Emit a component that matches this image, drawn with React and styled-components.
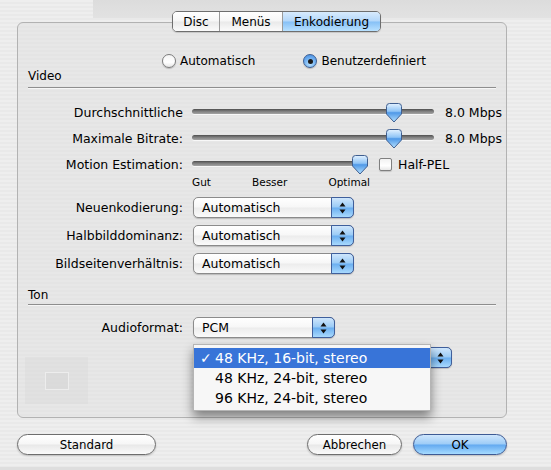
import React from "react";
import styled, { createGlobalStyle } from "styled-components";

const GlobalStyle = createGlobalStyle`
  html, body { margin: 0; padding: 0; }
  body {
    font-family: "DejaVu Sans", "Liberation Sans", sans-serif;
    font-size: 12.5px;
    color: #000;
  }
`;

const Sheet = styled.div`
  width: 551px;
  height: 470px;
  box-sizing: border-box;
  padding-top: 11px;
  display: flex;
  flex-direction: column;
  overflow: hidden;
  background:
    linear-gradient(#dcdcdc, #e2e2e2) 93px 0 / 100% 18px no-repeat,
    linear-gradient(#dedede, #dedede) 0 467px / 100% 3px no-repeat,
    repeating-linear-gradient(#eeeeee 0px, #eeeeee 2px, #e9e9e9 2px, #e9e9e9 4px);
`;

const Tabs = styled.div`
  display: flex;
  align-self: center;
  margin-left: 2px;
  height: 21px;
  box-sizing: border-box;
  border: 1px solid #6e6e6e;
  border-radius: 5px;
  overflow: hidden;
  position: relative;
  z-index: 2;
  box-shadow: 0 1px 1px rgba(0, 0, 0, 0.15);
`;

const Tab = styled.div`
  width: ${p => p.$w}px;
  display: flex;
  align-items: center;
  justify-content: center;
  font-size: 12px;
  border-left: ${p => (p.$first ? "none" : "1px solid #9a9a9a")};
  background: ${p =>
    p.$active
      ? "linear-gradient(#d8ebfd 0%, #b3d7fa 48%, #86c0f6 52%, #b8e1ff 100%)"
      : "linear-gradient(#ffffff 0%, #f6f6f6 48%, #e9e9e9 52%, #fbfbfb 100%)"};
`;

const Box = styled.div`
  margin: -10px 0 0 17px;
  width: 490px;
  height: 396px;
  box-sizing: border-box;
  border: 1px solid #b2b2b2;
  border-radius: 6px;
  background: rgba(222, 222, 222, 0.45);
  display: flex;
  flex-direction: column;
  position: relative;
`;

const RadioRow = styled.div`
  display: flex;
  align-items: center;
  height: 16px;
  margin-top: 30px;
  padding-left: 144px;
  gap: 48px;
  font-size: 12px;
`;

const RadioItem = styled.label`
  display: flex;
  align-items: center;
  gap: 4px;
`;

const RadioDot = styled.span`
  width: 14px;
  height: 14px;
  box-sizing: border-box;
  border-radius: 50%;
  border: 1px solid ${p => (p.$on ? "#3d5f93" : "#7c7c7c")};
  display: flex;
  align-items: center;
  justify-content: center;
  background: ${p =>
    p.$on
      ? "radial-gradient(circle at 50% 75%, #b9e2ff 0%, #6eaef0 55%, #3f86dc 100%)"
      : "linear-gradient(#f4f4f4, #ffffff 60%, #e6e6e6)"};
  box-shadow: 0 1px 1px rgba(0, 0, 0, 0.2);
  &::after {
    content: "";
    display: ${p => (p.$on ? "block" : "none")};
    width: 5px;
    height: 5px;
    border-radius: 50%;
    background: #1b1b1b;
  }
`;

const SectionTitle = styled.div`
  margin-left: 10px;
  font-size: 12px;
  line-height: 14px;
  margin-top: ${p => p.$mt}px;
`;

const Rule = styled.div`
  margin: ${p => p.$mt}px 10px 0 10px;
  border-top: 1px solid #8e8e8e;
  border-bottom: 1px solid #f6f6f6;
`;

const Row = styled.div`
  display: flex;
  align-items: ${p => (p.$top ? "flex-start" : "center")};
  margin-top: ${p => p.$mt}px;
`;

const Label = styled.div`
  width: 175px;
  flex: none;
  text-align: right;
  padding-right: 10px;
  box-sizing: border-box;
  line-height: 20px;
  white-space: nowrap;
`;

const SliderBox = styled.div`
  position: relative;
  width: ${p => p.$w}px;
  height: 20px;
  margin-left: -1px;
  flex: none;
`;

const Track = styled.div`
  position: absolute;
  left: 0;
  right: 0;
  top: 6px;
  height: 5px;
  border-radius: 3px;
  background: linear-gradient(#4e4e4e, #7d7d7d 45%, #a4a4a4);
  box-shadow: 0 1px 0 rgba(255, 255, 255, 0.7);
`;

const ThumbWrap = styled.div`
  position: absolute;
  top: 0;
  width: 16px;
  height: 20px;
`;

const Value = styled.div`
  margin-left: 11px;
  line-height: 20px;
`;

const Ticks = styled.div`
  margin-left: 174px;
  width: 178px;
  display: flex;
  justify-content: space-between;
  font-size: 10.5px;
  line-height: 12px;
  margin-top: 1px;
`;

const Check = styled.span`
  width: 13px;
  height: 13px;
  box-sizing: border-box;
  border: 1px solid #7f7f7f;
  border-radius: 2px;
  background: linear-gradient(#f2f2f2, #ffffff 60%, #e8e8e8);
  box-shadow: 0 1px 1px rgba(0, 0, 0, 0.15);
  margin: 3px 6px 0 11px;
`;

const CheckText = styled.span`
  line-height: 20px;
`;

const Popup = styled.div`
  position: relative;
  width: ${p => p.$w}px;
  height: 21px;
  box-sizing: border-box;
  border: 1px solid #8b8b8b;
  border-radius: 5px;
  display: flex;
  background: linear-gradient(#ffffff 0%, #f7f7f7 48%, #ececec 52%, #fbfbfb 100%);
  box-shadow: 0 1px 1px rgba(0, 0, 0, 0.18);
  flex: none;
`;

const PopupText = styled.div`
  flex: 1;
  padding-left: 8px;
  line-height: 19px;
  white-space: nowrap;
  overflow: hidden;
`;

const PopupArrows = styled.div`
  width: 21px;
  margin: -1px -1px -1px 0;
  border: 1px solid #3f5f9c;
  border-radius: 0 5px 5px 0;
  display: flex;
  align-items: center;
  justify-content: center;
  background: linear-gradient(#cfe6fc 0%, #9acbf6 48%, #6aaef0 52%, #a8d9fd 100%);
`;

const Menu = styled.div`
  position: absolute;
  left: -1px;
  top: -4px;
  width: 238px;
  box-sizing: border-box;
  padding: 3px 0 2px;
  background: rgba(247, 247, 247, 0.98);
  border: 1px solid #b5b5b5;
  box-shadow: 0 6px 10px rgba(0, 0, 0, 0.45);
  z-index: 5;
`;

const MenuItem = styled.div`
  position: relative;
  height: 20px;
  line-height: 20px;
  padding-left: 21px;
  font-size: 14px;
  white-space: nowrap;
  background: ${p => (p.$hl ? "#3874d8" : "transparent")};
  color: ${p => (p.$hl ? "#fff" : "#000")};
`;

const CheckMark = styled.span`
  position: absolute;
  left: 6px;
  top: 0;
`;

const Buttons = styled.div`
  display: flex;
  margin: 16px 0 0 17px;
  width: 490px;
  gap: 11px;
`;

const Button = styled.div`
  width: ${p => p.$w}px;
  height: 21px;
  box-sizing: border-box;
  border: 1px solid ${p => (p.$primary ? "#3d5a94" : "#6d6d6d")};
  border-radius: 11px;
  display: flex;
  align-items: center;
  justify-content: center;
  font-size: 11.8px;
  margin-left: ${p => p.$ml || 0}px;
  background: ${p =>
    p.$primary
      ? "linear-gradient(#cfe6fc 0%, #9dccf7 48%, #62a9f0 52%, #a6dbff 100%)"
      : "linear-gradient(#ffffff 0%, #f6f6f6 48%, #e8e8e8 52%, #fafafa 100%)"};
  box-shadow: 0 1px 2px rgba(0, 0, 0, 0.2);
`;

const Ghost = styled.div`
  position: absolute;
  left: 7px;
  top: 334px;
  width: 63px;
  height: 47px;
  background: rgba(205, 205, 205, 0.22);
  display: flex;
  align-items: center;
  justify-content: center;
  &::after {
    content: "";
    width: 22px;
    height: 16px;
    border: 1px solid rgba(255, 255, 255, 0.5);
    background: rgba(210, 210, 210, 0.35);
  }
`;

function Thumb({ id }) {
  return (
    <svg width="16" height="20" viewBox="0 0 16 20">
      <defs>
        <linearGradient id={id} x1="0" y1="0" x2="0" y2="1">
          <stop offset="0" stopColor="#e4f2ff" />
          <stop offset="0.42" stopColor="#8fc4f6" />
          <stop offset="0.5" stopColor="#4f98e7" />
          <stop offset="1" stopColor="#b6e2ff" />
        </linearGradient>
      </defs>
      <path
        d="M3.5 0.5 H12.5 Q15.5 0.5 15.5 3.5 V11 L8 19 L0.5 11 V3.5 Q0.5 0.5 3.5 0.5 Z"
        fill={`url(#${id})`}
        stroke="#3f5e8f"
        strokeWidth="1"
      />
    </svg>
  );
}

function Arrows() {
  return (
    <svg width="7" height="12" viewBox="0 0 7 12">
      <path d="M3.5 0.5 L6.5 4.5 H0.5 Z" fill="#111" />
      <path d="M3.5 11.5 L6.5 7.5 H0.5 Z" fill="#111" />
    </svg>
  );
}

function Slider({ width, value, id }) {
  return (
    <SliderBox $w={width}>
      <Track />
      <ThumbWrap style={{ left: Math.round(value * (width - 16)) }}>
        <Thumb id={id} />
      </ThumbWrap>
    </SliderBox>
  );
}

function Select({ width, value, children }) {
  return (
    <Popup $w={width}>
      <PopupText>{value}</PopupText>
      <PopupArrows>
        <Arrows />
      </PopupArrows>
      {children}
    </Popup>
  );
}

const rates = ["48 KHz, 16-bit, stereo", "48 KHz, 24-bit, stereo", "96 KHz, 24-bit, stereo"];

export default function App() {
  return (
    <>
      <GlobalStyle />
      <Sheet>
        <Tabs>
          <Tab $w={46} $first>Disc</Tab>
          <Tab $w={62}>Menüs</Tab>
          <Tab $w={97} $active>Enkodierung</Tab>
        </Tabs>
        <Box>
          <Ghost />
          <RadioRow>
            <RadioItem>
              <RadioDot />
              Automatisch
            </RadioItem>
            <RadioItem>
              <RadioDot $on />
              Benutzerdefiniert
            </RadioItem>
          </RadioRow>
          <SectionTitle $mt={0}>Video</SectionTitle>
          <Rule $mt={4} />

          <Row $top $mt={14}>
            <Label>Durchschnittliche</Label>
            <Slider width={242} value={0.858} id="t1" />
            <Value>8.0 Mbps</Value>
          </Row>
          <Row $top $mt={6}>
            <Label>Maximale Bitrate:</Label>
            <Slider width={242} value={0.858} id="t2" />
            <Value>8.0 Mbps</Value>
          </Row>
          <Row $top $mt={6}>
            <Label>Motion Estimation:</Label>
            <Slider width={176} value={1} id="t3" />
            <Check />
            <CheckText>Half-PEL</CheckText>
          </Row>
          <Ticks>
            <span>Gut</span>
            <span>Besser</span>
            <span>Optimal</span>
          </Ticks>

          <Row $mt={9}>
            <Label>Neuenkodierung:</Label>
            <Select width={161} value="Automatisch" />
          </Row>
          <Row $mt={7}>
            <Label>Halbbilddominanz:</Label>
            <Select width={161} value="Automatisch" />
          </Row>
          <Row $mt={7}>
            <Label>Bildseitenverhältnis:</Label>
            <Select width={161} value="Automatisch" />
          </Row>

          <SectionTitle $mt={14}>Ton</SectionTitle>
          <Rule $mt={2} />

          <Row $mt={11}>
            <Label>Audioformat:</Label>
            <Select width={142} value="PCM" />
          </Row>
          <Row $mt={9}>
            <Label />
            <Select width={259} value="">
              <Menu>
                {rates.map((r, i) => (
                  <MenuItem key={r} $hl={i === 0}>
                    {i === 0 && <CheckMark>✓</CheckMark>}
                    {r}
                  </MenuItem>
                ))}
              </Menu>
            </Select>
          </Row>
        </Box>
        <Buttons>
          <Button $w={139}>Standard</Button>
          <Button $w={95} $ml={140}>Abbrechen</Button>
          <Button $w={94} $primary>OK</Button>
        </Buttons>
      </Sheet>
    </>
  );
}
